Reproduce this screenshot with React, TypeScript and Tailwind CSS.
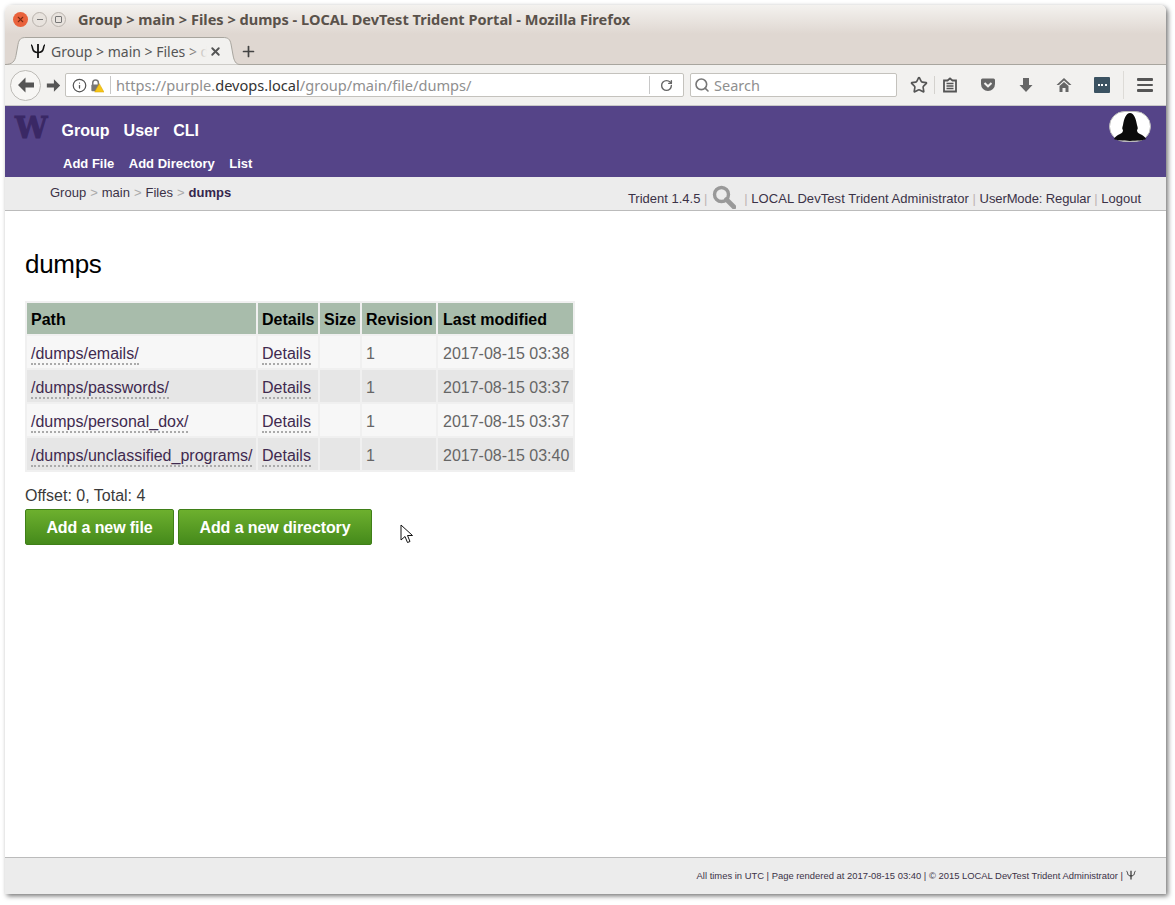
import React from 'react';
import { RotateCw, Star, Search, Info, Plus, X } from 'lucide-react';

const rows = [
  { path: '/dumps/emails/', date: '2017-08-15 03:38', shade: 'bg-[#f7f7f7]' },
  { path: '/dumps/passwords/', date: '2017-08-15 03:37', shade: 'bg-[#e6e6e6]' },
  { path: '/dumps/personal_dox/', date: '2017-08-15 03:37', shade: 'bg-[#f7f7f7]' },
  { path: '/dumps/unclassified_programs/', date: '2017-08-15 03:40', shade: 'bg-[#e6e6e6]' },
];

const Trident = ({ className }: { className?: string }) => (
  <svg viewBox="0 0 16 16" className={className} fill="none" stroke="currentColor">
    <path d="M8 1v14" strokeWidth="1.8" />
    <path d="M1 2c1 0 1.2 1.5 1.6 3.5C3.1 8 4.6 9.5 8 9.5s4.9-1.5 5.4-4C13.8 3.5 14 2 15 2" strokeWidth="1.5" />
  </svg>
);

const Sep = () => <span className="text-[#c0b4b4]">|</span>;
const Crumb = () => <span className="mx-[4px] text-[#aaa]">&gt;</span>;

const WindowButton = ({ children, className }: { children?: React.ReactNode; className: string }) => (
  <div className={`flex h-[15px] w-[15px] items-center justify-center rounded-full ${className}`}>{children}</div>
);

const Tab = () => (
  <div className="relative flex h-[28px] w-[235px] items-center pl-[25px]">
    <svg viewBox="0 0 235 28" className="absolute inset-0 h-full w-full">
      <path
        d="M0 27.5c7 0 10-3 11-9l2-11C14 2 16 .5 21 .5h197c5 0 7 1.500 8 6.500l2 11c1 6 3 9.500 7 9.500"
        fill="#f2f1ef"
        stroke="#a8a59e"
      />
    </svg>
    <Trident className="relative h-[16px] w-[16px] text-[#111]" />
    <div className="relative ml-[5px] w-[156px] overflow-hidden whitespace-nowrap font-['Noto_Sans',sans-serif] text-[14px] text-[#555]">
      Group &gt; main &gt; Files &gt; dumps
      <span className="absolute inset-y-0 right-0 w-[20px] bg-gradient-to-r from-transparent to-[#f2f1ef]" />
    </div>
    <X size={13} strokeWidth={3.5} className="relative ml-[2px] text-[#555]" />
  </div>
);

const Toolbar = () => (
  <div className="flex h-[41px] items-center border-b border-[#c8c8c8] bg-[#f2f1ef] pl-[5px]">
    <div className="flex h-[31px] w-[31px] items-center justify-center rounded-full border border-[#bdbbb7] bg-[#f7f6f4]">
      <svg viewBox="0 0 18 18" className="h-[18px] w-[18px]">
        <path d="M8.500 1.500L1 9l7.500 7.500V11.500H17v-5H8.500z" fill="#555" />
      </svg>
    </div>
    <svg viewBox="0 0 18 18" className="ml-[5px] h-[15px] w-[15px]">
      <path d="M9.500 1.500L17 9l-7.500 7.500V11.500H1v-5h8.500z" fill="#555" />
    </svg>
    <div className="ml-[4px] flex h-[24px] w-[619px] items-center rounded-[2px] border border-[#c4c2bd] bg-white font-['Noto_Sans',sans-serif] text-[14.600px]">
      <Info size={15} className="ml-[6px] text-[#555]" />
      <svg viewBox="0 0 16 16" className="ml-[2px] h-[15px] w-[15px]">
        <path d="M4 8V5a3 3 0 0 1 6 0v3" fill="none" stroke="#777" strokeWidth="1.600" />
        <rect x="2.500" y="7" width="9" height="7" rx="1" fill="#777" />
        <path d="M11 6l5 9H6z" fill="#f5c518" stroke="#d8a400" strokeWidth=".5" />
      </svg>
      <span className="ml-[6px] mr-[5px] h-[18px] border-l border-[#c8c8c8]" />
      <span className="pt-[1px] text-[#8f8f8f]">
        https://purple.<span className="text-[#333]">devops.local</span>/group/main/file/dumps/
      </span>
      <span className="ml-auto h-[18px] border-l border-[#c8c8c8]" />
      <RotateCw size={13} strokeWidth={2.6} className="mx-[10px] text-[#666]" />
    </div>
    <div className="ml-[6px] flex h-[24px] w-[207px] items-center rounded-[2px] border border-[#c4c2bd] bg-white font-['Noto_Sans',sans-serif] text-[14.500px] text-[#8f8f8f]">
      <Search size={16} strokeWidth={2.4} className="ml-[3px] text-[#777]" />
      <span className="ml-[4px] pt-[1px]">Search</span>
    </div>
    <Star size={18} strokeWidth={2.2} className="ml-[13px] text-[#555]" />
    <span className="ml-[6px] h-[18px] border-l border-[#d4d2ce]" />
    <svg viewBox="0 0 16 16" className="ml-[7px] h-[16px] w-[16px]">
      <path d="M2 3.500h3.500L8 1.500l2.500 2H14v11H2z" fill="none" stroke="#555" strokeWidth="1.800" />
      <path d="M4.500 6.500h7M4.500 9h7M4.500 11.500h7" stroke="#555" strokeWidth="1.500" />
    </svg>
    <svg viewBox="0 0 16 16" className="ml-[22px] h-[16px] w-[16px]">
      <path d="M1 3a1.500 1.500 0 0 1 1.500-1.500h11A1.500 1.500 0 0 1 15 3v4a7 7 0 0 1-14 0z" fill="#666" />
      <path d="M4.500 6L8 9.300 11.500 6" fill="none" stroke="#f2f1ef" strokeWidth="2" />
    </svg>
    <svg viewBox="0 0 16 16" className="ml-[22px] h-[16px] w-[16px]">
      <path d="M5 1h6v7h3.500L8 15 1.500 8H5z" fill="#666" />
    </svg>
    <svg viewBox="0 0 16 16" className="ml-[22px] h-[16px] w-[16px]">
      <path d="M8 1L0.500 8h2.500L8 3.500 13 8h2.500z" fill="#666" />
      <path d="M3.500 9L8 5l4.500 4v6H9.500v-4h-3v4h-3z" fill="#666" />
    </svg>
    <div className="ml-[22px] flex h-[16px] w-[16px] items-center justify-center rounded-[1px] bg-[#3b5261]">
      <span className="h-[2px] w-[9px] border-t-2 border-dotted border-white" />
    </div>
    <span className="ml-[13px] h-[28px] border-l border-[#dddbd7]" />
    <div className="ml-[13px] flex w-[16px] flex-col gap-[3px]">
      <span className="h-[2.500px] rounded-[1px] bg-[#555]" />
      <span className="h-[2.500px] rounded-[1px] bg-[#555]" />
      <span className="h-[2.500px] rounded-[1px] bg-[#555]" />
    </div>
  </div>
);

const Avatar = () => (
  <svg viewBox="0 0 42 31" className="h-[31px] w-[42px]">
    <rect x=".5" y=".5" width="41" height="30" rx="15" fill="#fff" stroke="#bbb" />
    <path
      d="M5 28c1-2 3-4 6-5 2-1 3-2 3-4-1-1-1-2 0-5 1-6 3-12 7-12s6 6 7 12c1 3 1 4 0 5 0 2 1 3 3 4 3 1 5 3 6 5-4 2.500-28 2.500-32 0z"
      fill="#0a0a0a"
    />
  </svg>
);

const Header = () => (
  <div className="h-[71px] bg-[#554488] font-['Liberation_Sans',sans-serif] font-bold text-white">
    <div className="flex h-[50px] items-start justify-between pr-[15px]">
      <div className="flex items-start">
        <span className="ml-[10px] mt-[5px] font-['DejaVu_Serif',serif] text-[29px] leading-[34px] text-[#3a2865] [-webkit-text-stroke:1px_#3a2865]">W</span>
        <span className="ml-[14px] mt-[16px] text-[16px] leading-[18px]">Group</span>
        <span className="ml-[14px] mt-[16px] text-[16px] leading-[18px]">User</span>
        <span className="ml-[14px] mt-[16px] text-[16px] leading-[18px]">CLI</span>
      </div>
      <div className="mt-[5px]">
        <Avatar />
      </div>
    </div>
    <div className="flex gap-[14.500px] pl-[58px] text-[13px] leading-[16px]">
      <span>Add File</span>
      <span>Add Directory</span>
      <span>List</span>
    </div>
  </div>
);

const InfoBar = () => (
  <div className="flex h-[34px] justify-between border-b border-[#bbb] bg-[#ececec] pl-[45px] pr-[25px] font-['Liberation_Sans',sans-serif] text-[13px] text-[#3b3247]">
    <div className="mt-[8px] leading-[16px]">
      Group<Crumb />main<Crumb />Files<Crumb /><b className="text-[#35264d]">dumps</b>
    </div>
    <div className="mt-[9px] flex items-start leading-[26px] whitespace-pre">
      <span>Trident 1.4.5 <Sep /> </span>
      <svg viewBox="0 0 24 24" className="mx-[1px] -mt-[1px] h-[24px] w-[24px]">
        <circle cx="9.500" cy="9.500" r="7" fill="none" stroke="#999" strokeWidth="3.400" />
        <path d="M14.500 14.500L22 22" stroke="#999" strokeWidth="4.600" strokeLinecap="round" />
      </svg>
      <span>  <Sep /> <span className="tracking-[0.06px]">LOCAL DevTest Trident Administrator</span> <Sep /> <span className="tracking-[-0.1px]">UserMode: Regular</span> <Sep /> Logout</span>
    </div>
  </div>
);

const FileTable = () => (
  <table className="mt-[21px] w-[550px] table-fixed border-separate border-spacing-[2px] whitespace-nowrap bg-[#f0f0f0] text-left text-[16px] leading-[18px]">
    <thead>
      <tr className="h-[31px] bg-[#a8bcab] font-bold text-black">
        <th className="w-[229px] px-[4px] pt-[2px]">Path</th>
        <th className="w-[60px] px-[4px] pt-[2px]">Details</th>
        <th className="w-[40px] px-[4px] pt-[2px]">Size</th>
        <th className="w-[74px] px-[4px] pt-[2px]">Revision</th>
        <th className="w-[135px] px-[5px] pt-[2px]">Last modified</th>
      </tr>
    </thead>
    <tbody>
      {rows.map((row) => (
        <tr key={row.path} className={`h-[32px] ${row.shade} text-[#666]`}>
          <td className="px-[4px] pt-[4px]">
            <span className="border-b-2 border-dotted border-[#aaa] pb-[1px] text-[#3f2a4f]">{row.path}</span>
          </td>
          <td className="px-[4px] pt-[4px]">
            <span className="border-b-2 border-dotted border-[#aaa] pb-[1px] text-[#3f2a4f]">Details</span>
          </td>
          <td />
          <td className="px-[4px] pt-[4px]">1</td>
          <td className="px-[5px] pt-[4px]">{row.date}</td>
        </tr>
      ))}
    </tbody>
  </table>
);

const GreenButton = ({ children, className }: { children: React.ReactNode; className: string }) => (
  <button className={`h-[36px] rounded-[2px] border border-[#3f7f18] bg-gradient-to-b from-[#6db02e] to-[#458a1b] pt-[2px] text-[16px] font-bold tracking-[-0.1px] text-white ${className}`}>
    {children}
  </button>
);

const Cursor = () => (
  <svg viewBox="0 0 14 20" className="absolute left-[395px] top-[313px] h-[20px] w-[14px]">
    <path d="M1 1v15l4-3.500 2.500 6 2.500-1-2.500-6h5z" fill="#fff" stroke="#111" strokeWidth="1" />
  </svg>
);

export default function App() {
  return (
    <div className="h-[905px] w-[1175px] bg-white pl-[5px] pt-[5px]">
      <div className="flex h-[889px] w-[1161px] flex-col overflow-hidden rounded-t-[6px] bg-white shadow-[2px_2px_5px_rgba(0,0,0,0.55)]">
        {/* Title bar */}
        <div className="flex h-[29px] shrink-0 items-center bg-gradient-to-b from-[#f4f2ef] to-[#dfd7d1] pl-[8px]">
          <WindowButton className="bg-[#e9623c]">
            <X size={9} strokeWidth={3} className="text-[#7a2a14]" />
          </WindowButton>
          <WindowButton className="ml-[4px] border border-[#b9b3ad] bg-[#e8e3de]">
            <span className="h-[1px] w-[6px] bg-[#777]" />
          </WindowButton>
          <WindowButton className="ml-[4px] border border-[#b9b3ad] bg-[#e8e3de]">
            <span className="h-[7px] w-[7px] rounded-[1px] border border-[#777]" />
          </WindowButton>
          <span className="ml-[12px] whitespace-nowrap font-['Noto_Sans',sans-serif] text-[14.550px] font-bold text-[#5a524b]">
            Group &gt; main &gt; Files &gt; dumps - LOCAL DevTest Trident Portal - Mozilla Firefox
          </span>
        </div>
        {/* Tab strip */}
        <div className="flex h-[31px] shrink-0 items-end border-b border-[#a8a59e] bg-[#dfd7d1]">
          <div className="-mb-px flex items-end">
            <Tab />
            <Plus size={17} strokeWidth={2.4} className="mb-[5px] text-[#444]" />
          </div>
        </div>
        <Toolbar />
        <Header />
        <InfoBar />
        {/* Page body */}
        <main className="relative flex-1 px-[20px] pt-[37px] font-['Liberation_Sans',sans-serif]">
          <h1 className="text-[26px] leading-[32px] tracking-[-0.3px] text-black">dumps</h1>
          <FileTable />
          <p className="mt-[15px] text-[16px] leading-[18px] text-[#3a3a3a]">Offset: 0, Total: 4</p>
          <div className="mt-[4px] flex gap-[4px]">
            <GreenButton className="w-[149px]">Add a new file</GreenButton>
            <GreenButton className="w-[194px]">Add a new directory</GreenButton>
          </div>
          <Cursor />
        </main>
        {/* Footer */}
        <footer className="flex h-[37px] shrink-0 items-center justify-end border-t border-[#bbb] bg-[#ececec] pr-[30px] font-['Liberation_Sans',sans-serif] text-[9.420px] text-[#3b3247]">
          <span>All times in UTC | Page rendered at 2017-08-15 03:40 | © 2015 LOCAL DevTest Trident Administrator |</span>
          <Trident className="ml-[3px] mb-[2px] h-[10px] w-[10px] text-[#222]" />
        </footer>
      </div>
    </div>
  );
}
